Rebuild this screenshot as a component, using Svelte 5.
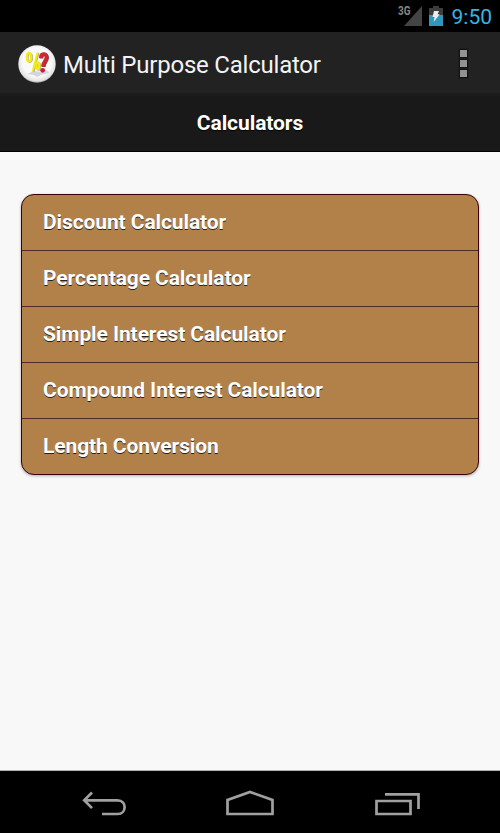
<script>
  const calculators = [
    'Discount Calculator',
    'Percentage Calculator',
    'Simple Interest Calculator',
    'Compound Interest Calculator',
    'Length Conversion'
  ];

  let title = 'Multi Purpose Calculator';
  let time = '9:50';
</script>

<main>
  <div class="status">
    <svg class="signal" width="26" height="32" viewBox="0 0 26 32">
      <path d="M7 26L25 6v20z" fill="#444" />
      <text x="1" y="15" textLength="12.5" lengthAdjust="spacingAndGlyphs">3G</text>
    </svg>
    <svg class="battery" width="14" height="32" viewBox="0 0 14 32">
      <path d="M0 8h4V6h6v2h4v7H0z" fill="#3c3c3c" />
      <path d="M0 15h14v11H0z" fill="#2f97bb" />
      <path d="M5 11h5L8.6 14.2h2.2L4.6 22l1-5H3.5z" fill="#eee" />
    </svg>
    <span class="time">{time}</span>
  </div>

  <div class="action-bar">
    <svg class="logo" width="38" height="38" viewBox="0 0 38 38">
      <defs>
        <radialGradient id="disc" cx="50%" cy="45%" r="54%">
          <stop offset="0.7" stop-color="#fafafa" />
          <stop offset="0.94" stop-color="#e2e2e2" />
          <stop offset="1" stop-color="#aaa" />
        </radialGradient>
      </defs>
      <circle cx="19" cy="19" r="18.7" fill="url(#disc)" />
      <path d="M9 29l7-3 8 1 6-1 1 2-8 2-4 2-3-2z" fill="#d5d5df" />
      <g fill="none" stroke="#b0b0a0" stroke-width="2" transform="translate(.9 .5)">
        <ellipse cx="11" cy="12.3" rx="2.2" ry="4.1" />
        <path d="M19.6 7.500L14.600 26.500" />
        <ellipse cx="19.800" cy="20.800" rx="1.500" ry="3.400" />
      </g>
      <g fill="none" stroke="#f5eb10" stroke-width="2.300">
        <ellipse cx="11" cy="12.3" rx="2.2" ry="4.1" />
        <path d="M19.6 7.500L14.600 26.500" stroke-width="1.900" />
        <ellipse cx="19.800" cy="20.800" rx="1.500" ry="3.400" />
      </g>
      <path d="M23.400 13.500c0-5.200 5.800-5.200 5.800-.9 0 4.400-3.400 4.400-3.400 9.400" fill="none" stroke="#963439" stroke-width="3.600" />
      <path d="M22.700 13c0-5.200 5.600-5.200 5.600-.9 0 4.400-3.600 4.400-3.600 9.400" fill="none" stroke="#cc2930" stroke-width="3.400" />
      <circle cx="24.700" cy="25.300" r="2.400" fill="#c0282f" />
    </svg>
    <h1>{title}</h1>
    <button class="more" aria-label="More options">
      <i></i><i></i><i></i>
    </button>
  </div>

  <div class="header"><h2>Calculators</h2></div>

  <div class="content">
    <ul>
      {#each calculators as name}
        <li>{name}</li>
      {/each}
    </ul>
  </div>

  <div class="nav">
    <svg width="500" height="62" viewBox="0 0 500 62" fill="none" stroke="#a0a0a0" stroke-width="2.700">
      <path d="M84 29.300h33.500c9.500 0 9.500 13.700 0 13.700H102M92 21.500l-7.800 7.800 7.800 7.800" />
      <path d="M227.500 43V29L250 21l22.500 8v14z" />
      <path d="M376.500 30h34v13h-34zM385 23.300h33.500v14.700" />
    </svg>
  </div>
</main>

<style>
  :global(body) {
    margin: 0;
    background: #f8f8f8;
  }

  main {
    display: flex;
    flex-direction: column;
    height: 833px;
    font-family: Roboto, sans-serif;
    background: #f8f8f8;
  }

  .status {
    display: flex;
    height: 32px;
    background: #000;
    justify-content: flex-end;
    box-sizing: border-box;
    padding-right: 8px;
  }

  .signal text {
    font: bold 12px Roboto, sans-serif;
    fill: #858585;
  }

  .battery {
    margin-left: 6px;
  }

  .time {
    margin-left: 9px;
    color: #33b5e5;
    font-size: 21px;
    line-height: 34px;
  }

  .action-bar {
    display: flex;
    align-items: center;
    height: 61px;
    box-sizing: border-box;
    padding: 2px 33px 0 18px;
    background: #222;
  }

  h1 {
    flex: 1;
    margin: 2px 0 0 7px;
    color: #f3f3f3;
    font-size: 24px;
    font-weight: 400;
    letter-spacing: -0.22px;
    line-height: 30px;
    white-space: nowrap;
  }

  .more {
    display: flex;
    flex-direction: column;
    gap: 3px;
    padding: 0;
    border: 0;
    background: none;
  }

  .more i {
    width: 7px;
    height: 7px;
    background: #929292;
    box-shadow: 0 0 1px 1px #111;
  }

  .header {
    height: 59px;
    box-sizing: border-box;
    border-top: 3px solid #1c1c1c;
    border-bottom: 1px solid #000;
    background: #191919;
  }

  h2 {
    margin: 0;
    color: #fff;
    font-size: 21px;
    font-weight: 700;
    letter-spacing: -0.08px;
    line-height: 55px;
    text-align: center;
    text-shadow: 0 1px 1px #000;
  }

  .content {
    flex: 1;
    padding: 42px 21px 0;
  }

  ul {
    margin: 0;
    padding: 0;
    list-style: none;
    border: 1px solid #3b0008;
    border-radius: 13px;
    background: #b18149;
    box-shadow: 0 1px 3px rgba(0, 0, 0, 0.3);
  }

  li {
    height: 55px;
    padding-left: 21px;
    color: #fff;
    font-size: 21px;
    font-weight: 700;
    letter-spacing: -0.1px;
    line-height: 54px;
    text-shadow: 0 1px 0 #222;
  }

  li + li {
    border-top: 1px solid #4e2c24;
  }

  .nav {
    height: 62px;
    border-top: 1px solid #aab5ad;
    background: #000;
  }
</style>
